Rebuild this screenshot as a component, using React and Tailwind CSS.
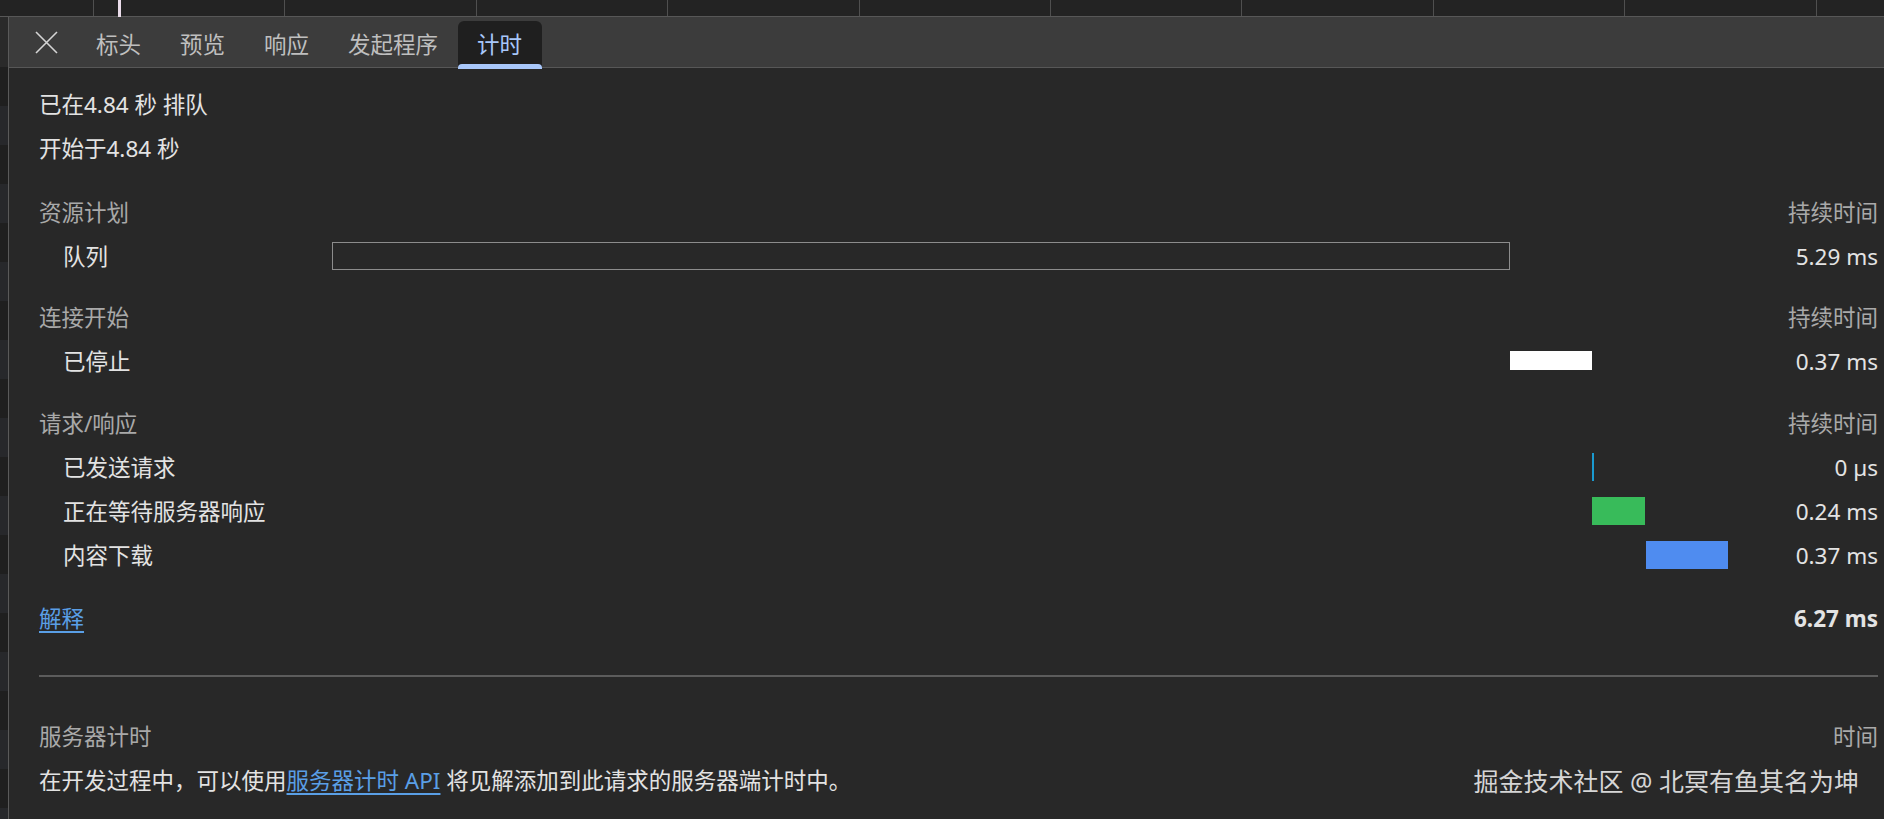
const MS_PX = 1396 / 6.27;

const tabs = ['标头', '预览', '响应', '发起程序', '计时'];

const sections = [
  {
    title: '资源计划',
    mt: 'mt-[20px]',
    rows: [{ label: '队列', start: 0, dur: 5.29, bar: 'h-[28px] border border-[#8c8c8c]', value: '5.29 ms' }],
  },
  {
    title: '连接开始',
    mt: 'mt-[17px]',
    rows: [{ label: '已停止', start: 5.29, dur: 0.37, bar: 'h-[19px] bg-white', value: '0.37 ms' }],
  },
  {
    title: '请求/响应',
    mt: 'mt-[18px]',
    rows: [
      { label: '已发送请求', start: 5.66, dur: 0.009, bar: 'h-[28px] bg-[#1a9ad0]', value: '0 µs' },
      { label: '正在等待服务器响应', start: 5.66, dur: 0.24, bar: 'h-[28px] bg-[#38bb5a]', value: '0.24 ms' },
      { label: '内容下载', start: 5.9, dur: 0.37, bar: 'h-[28px] bg-[#4f8cf0]', value: '0.37 ms' },
    ],
  },
];

function TopRuler() {
  const cells = Array.from({ length: 10 });
  return (
    <div className="relative flex h-[17px] shrink-0 border-b border-[#575757] bg-[#232323]">
      <div className="w-[93px] shrink-0" />
      {cells.map((_, i) => (
        <div key={i} className="w-[191.4px] shrink-0 border-l border-[#4f4f4f]" />
      ))}
      {/* current time marker */}
      <div className="absolute left-[118px] top-0 h-[17px] w-[3px] bg-[#eadcea]" />
    </div>
  );
}

function LeftStrip() {
  const stripes = Array.from({ length: 22 });
  return (
    <div className="flex w-[9px] shrink-0 flex-col overflow-hidden border-r border-[#5a5a5a] bg-[#1f1f1f]">
      <div className="h-[50px] shrink-0 bg-[#2a2a2a]" />
      {stripes.map((_, i) => (
        <div key={i} className={`h-[39px] shrink-0 ${i % 2 === 0 ? 'bg-[#1f1f1f]' : 'bg-[#27282b]'}`} />
      ))}
    </div>
  );
}

function CloseIcon() {
  return (
    <svg width="23" height="23" viewBox="0 0 23 23" fill="none" stroke="#d4d4d4" strokeWidth="1.6">
      <path d="M1 1 L22 22 M22 1 L1 22" />
    </svg>
  );
}

function TabBar() {
  return (
    <div className="flex h-[51px] shrink-0 items-end border-b border-[#575757] bg-[#3c3c3c]">
      <div className="ml-[26px] mr-[18.5px] flex h-[46px] w-[23px] items-center pb-[4px]">
        <CloseIcon />
      </div>
      {tabs.map((t) => {
        const active = t === '计时';
        return (
          <div
            key={t}
            className={`relative flex h-[46px] items-center px-[19.5px] pt-[2px] ${
              active ? 'rounded-t-[6px] bg-[#1f1f1f] text-[#a8c7fa]' : 'text-[#bfbfbf]'
            }`}
          >
            {t}
            {active && <div className="absolute bottom-[-2px] left-0 right-0 h-[5px] rounded-t-[4px] bg-[#a8c7fa]" />}
          </div>
        );
      })}
    </div>
  );
}

function TimingRow({ row }) {
  return (
    <div className="flex h-[44px] items-center">
      <div className="w-[293px] shrink-0 pl-[24px] text-[#e3e3e3]">{row.label}</div>
      <div className="flex w-[1396px] shrink-0 items-center pb-[3px]">
        <div
          className={row.bar}
          style={{ marginLeft: Math.round(row.start * MS_PX), width: Math.max(2, Math.round(row.dur * MS_PX)) }}
        />
      </div>
      <div className="flex-1 text-right text-[#e3e3e3]">{row.value}</div>
    </div>
  );
}

function SectionHeader({ title, right }) {
  return (
    <div className="flex h-[44px] items-center justify-between text-[#a9a9a9]">
      <span>{title}</span>
      <span>{right}</span>
    </div>
  );
}

export default function App() {
  return (
    <div
      className="flex h-[819px] w-[1884px] flex-col overflow-hidden bg-[#282828] text-[22.5px] leading-[44px]"
      style={{ fontFamily: '"Noto Sans", "Noto Sans CJK SC", sans-serif' }}
    >
      <TopRuler />
      <div className="flex flex-1">
        <LeftStrip />
        <div className="flex flex-1 flex-col">
          <TabBar />
          <div className="flex flex-col pl-[30px] pr-[6px] pt-[15px]">
            <div className="flex h-[44px] items-center text-[#e3e3e3]">已在4.84 秒 排队</div>
            <div className="flex h-[44px] items-center text-[#e3e3e3]">开始于4.84 秒</div>

            {sections.map((s) => (
              <div key={s.title} className={`flex flex-col ${s.mt}`}>
                <SectionHeader title={s.title} right="持续时间" />
                {s.rows.map((r) => (
                  <TimingRow key={r.label} row={r} />
                ))}
              </div>
            ))}

            <div className="mt-[19px] flex h-[44px] items-center justify-between">
              <a href="#" className="text-[#5a9fe6] underline underline-offset-[4px]">
                解释
              </a>
              <span className="font-bold text-[#e3e3e3]">6.27 ms</span>
            </div>

            <div className="mt-[34px] h-[2px] bg-[#5c5c5c]" />

            <div className="mt-[38px]">
              <SectionHeader title="服务器计时" right="时间" />
            </div>
            <div className="flex h-[44px] items-center justify-between">
              <p className="text-[#e3e3e3]">
                在开发过程中，可以使用
                <a href="#" className="text-[#5a9fe6] underline underline-offset-[4px]">
                  服务器计时 API
                </a>{' '}
                将见解添加到此请求的服务器端计时中。
              </p>
              <span className="pr-[19px] text-[25px] text-[#d6d6d6]">掘金技术社区 @ 北冥有鱼其名为坤</span>
            </div>
          </div>
        </div>
      </div>
    </div>
  );
}
